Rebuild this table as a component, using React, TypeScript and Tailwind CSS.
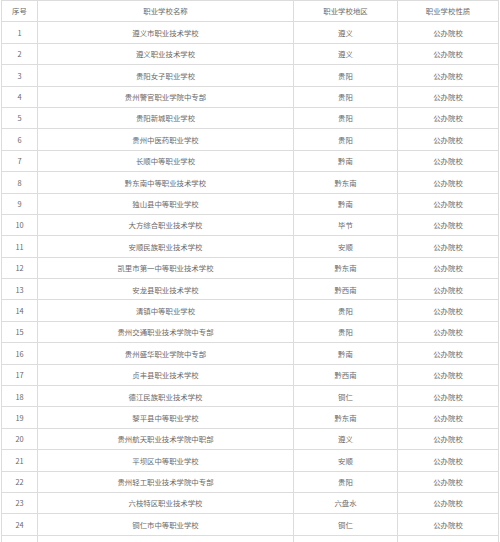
const rows: [string, string][] = [
  ["遵义市职业技术学校", "遵义"],
  ["遵义职业技术学校", "遵义"],
  ["贵阳女子职业学校", "贵阳"],
  ["贵州警官职业学院中专部", "贵阳"],
  ["贵阳新城职业学校", "贵阳"],
  ["贵州中医药职业学校", "贵阳"],
  ["长顺中等职业学校", "黔南"],
  ["黔东南中等职业技术学校", "黔东南"],
  ["独山县中等职业学校", "黔南"],
  ["大方综合职业技术学校", "毕节"],
  ["安顺民族职业技术学校", "安顺"],
  ["凯里市第一中等职业技术学校", "黔东南"],
  ["安龙县职业技术学校", "黔西南"],
  ["清镇中等职业学校", "贵阳"],
  ["贵州交通职业技术学院中专部", "贵阳"],
  ["贵州盛华职业学院中专部", "黔南"],
  ["贞丰县职业技术学校", "黔西南"],
  ["德江民族职业技术学校", "铜仁"],
  ["黎平县中等职业学校", "黔东南"],
  ["贵州航天职业技术学院中职部", "遵义"],
  ["平坝区中等职业学校", "安顺"],
  ["贵州轻工职业技术学院中专部", "贵阳"],
  ["六枝特区职业技术学校", "六盘水"],
  ["铜仁市中等职业学校", "铜仁"],
];

const cell = "border border-[#dcdcdc] h-[21.4px] p-0 text-center align-middle font-normal";

export default function App() {
  return (
    <div className="w-[500px] h-[542px] overflow-hidden bg-white pl-px">
      <table
        className="w-[497px] border-collapse table-fixed text-[7.4px] leading-none text-[#6a6a6a]"
        style={{ fontFamily: '"Noto Sans CJK SC", "Liberation Sans", sans-serif' }}
      >
        <colgroup>
          <col className="w-[36px]" />
          <col className="w-[256px]" />
          <col className="w-[104px]" />
          <col className="w-[101px]" />
        </colgroup>
        <thead>
          <tr>
            <th className={cell}>序号</th>
            <th className={cell}>职业学校名称</th>
            <th className={cell}>职业学校地区</th>
            <th className={cell}>职业学校性质</th>
          </tr>
        </thead>
        <tbody>
          {rows.map(([name, area], i) => (
            <tr key={i}>
              <td className={cell}>{i + 1}</td>
              <td className={cell}>{name}</td>
              <td className={cell}>{area}</td>
              <td className={cell}>公办院校</td>
            </tr>
          ))}
          <tr>
            <td className={cell}></td>
            <td className={cell}></td>
            <td className={cell}></td>
            <td className={cell}></td>
          </tr>
        </tbody>
      </table>
    </div>
  );
}
